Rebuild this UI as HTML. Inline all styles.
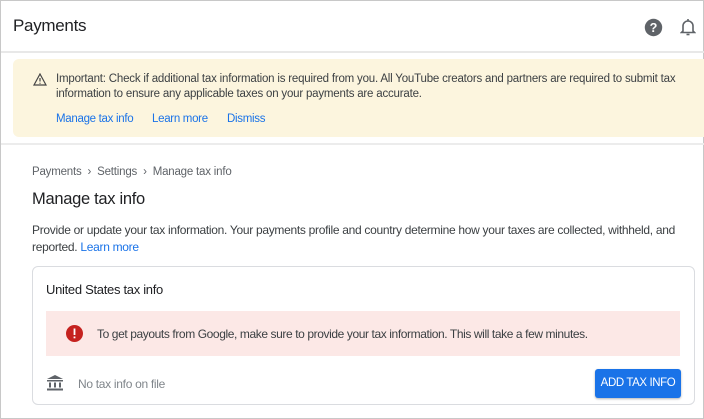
<!DOCTYPE html>
<html><head><style>
*{margin:0;padding:0;box-sizing:border-box}
body{width:704px;height:419px;background:#fff;font-family:"Liberation Sans",sans-serif;color:#202124;position:relative;overflow:hidden;border:1px solid #c8c8c8}
.a{position:absolute;white-space:nowrap}
.link{color:#1a73e8}
</style></head><body>
<div class="a" style="left:12px;top:15px;font-size:17px;letter-spacing:-0.3px">Payments</div>
<svg class="a" style="left:643px;top:17px" width="19" height="19" viewBox="0 0 24 24"><circle cx="12" cy="12" r="11" fill="#5f6368"/><text x="12" y="17.5" text-anchor="middle" font-family="Liberation Sans" font-weight="bold" font-size="16" fill="#fff">?</text></svg>
<svg class="a" style="left:679px;top:17px" width="16" height="19" viewBox="0 0 16 19"><path d="M3 13V8a5 5 0 0 1 10 0v5l1.5 1.5h-13z" fill="none" stroke="#5f6368" stroke-width="1.6"/><path d="M6.5 16.5h3" stroke="#5f6368" stroke-width="1.6"/><path d="M8 1v2" stroke="#5f6368" stroke-width="1.6"/></svg>
<div class="a" style="left:0;top:50px;width:704px;height:2px;background:#e8e8e8"></div>
<div class="a" style="left:12px;top:58px;width:700px;height:78px;background:#fcf5de;border-radius:6px"></div>
<svg class="a" style="left:32px;top:72px" width="14" height="13" viewBox="0 0 14 13"><path d="M7 1L13 12H1z" fill="none" stroke="#444" stroke-width="1.2"/><path d="M7 5v3.5M7 9.8v1" stroke="#444" stroke-width="1.2"/></svg>
<div class="a" style="left:55px;top:71px;font-size:11.5px;line-height:15px;color:#3c4043;letter-spacing:-0.2px">Important: Check if additional tax information is required from you. All YouTube creators and partners are required to submit tax<br>information to ensure any applicable taxes on your payments are accurate.</div>
<div class="a link" style="left:55px;top:112px;font-size:11.5px;letter-spacing:-0.3px">Manage tax info</div>
<div class="a link" style="left:151px;top:112px;font-size:11.5px;letter-spacing:-0.3px">Learn more</div>
<div class="a link" style="left:226px;top:112px;font-size:11.5px;letter-spacing:-0.3px">Dismiss</div>
<div class="a" style="left:0;top:142px;width:704px;height:2px;background:#ececec"></div>
<div class="a" style="left:31px;top:165px;font-size:11.5px;color:#5f6368;letter-spacing:-0.2px">Payments &nbsp;›&nbsp; Settings &nbsp;›&nbsp; Manage tax info</div>
<div class="a" style="left:31px;top:189px;font-size:16.5px;letter-spacing:-0.3px">Manage tax info</div>
<div class="a" style="left:31px;top:221px;font-size:12px;line-height:17px;color:#3c4043;letter-spacing:-0.3px">Provide or update your tax information. Your payments profile and country determine how your taxes are collected, withheld, and<br>reported. <span class="link">Learn more</span></div>
<div class="a" style="left:31px;top:265px;width:663px;height:139px;border:1px solid #dadce0;border-radius:6px"></div>
<div class="a" style="left:45px;top:281px;font-size:13px;color:#202124;letter-spacing:-0.3px">United States tax info</div>
<div class="a" style="left:45px;top:310px;width:634px;height:45px;background:#fce8e6"></div>
<svg class="a" style="left:65px;top:324px" width="17" height="17" viewBox="0 0 17 17"><circle cx="8.5" cy="8.5" r="8.5" fill="#c5221f"/><rect x="7.6" y="3.5" width="1.8" height="6.5" fill="#fff"/><rect x="7.6" y="11.5" width="1.8" height="1.8" fill="#fff"/></svg>
<div class="a" style="left:96px;top:326px;font-size:12px;color:#3c4043;letter-spacing:-0.4px">To get payouts from Google, make sure to provide your tax information. This will take a few minutes.</div>
<svg class="a" style="left:46px;top:374px" width="16" height="16" viewBox="0 0 16 16"><path d="M8 0L16 4H0z" fill="#5f6368"/><rect x="0" y="5" width="16" height="1.5" fill="#5f6368"/><rect x="2" y="7.5" width="2" height="5" fill="#5f6368"/><rect x="7" y="7.5" width="2" height="5" fill="#5f6368"/><rect x="12" y="7.5" width="2" height="5" fill="#5f6368"/><rect x="0" y="13.5" width="16" height="2" fill="#5f6368"/></svg>
<div class="a" style="left:77px;top:376px;font-size:12px;color:#80868b;letter-spacing:-0.3px">No tax info on file</div>
<div class="a" style="left:594px;top:368px;width:86px;height:29px;background:#1a73e8;border-radius:3px;color:#fff;font-size:11.5px;line-height:29px;text-align:center;letter-spacing:-0.4px;box-shadow:0 1px 2px rgba(0,0,0,.3)">ADD TAX INFO</div>
</body></html>
